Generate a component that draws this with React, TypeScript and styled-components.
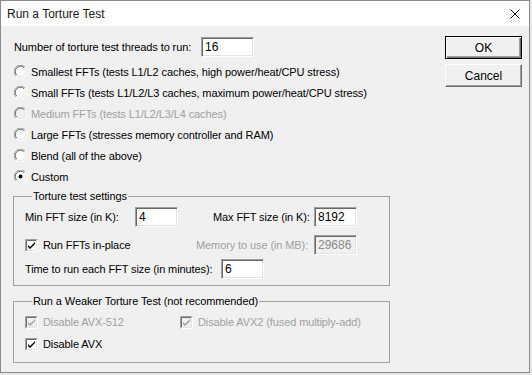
import * as React from "react";
import styled, { createGlobalStyle } from "styled-components";

const GlobalStyle = createGlobalStyle`
  html, body {
    margin: 0;
    padding: 0;
    background: #e6e6e6;
  }
  * {
    box-sizing: border-box;
  }
`;

const Window = styled.div`
  width: 530px;
  height: 373px;
  border: 1px solid #8a8a8a;
  background: #f0f0f0;
  font-family: "Liberation Sans", Arial, sans-serif;
  font-size: 11px;
  letter-spacing: -0.1px;
  color: #000;
  display: flex;
  flex-direction: column;
`;

const TitleBar = styled.div`
  height: 25px;
  background: #fff;
  display: flex;
  align-items: center;
  justify-content: space-between;
  padding: 0 9px 0 6px;
  font-size: 12px;
  letter-spacing: 0;
  color: #1a1a1a;
`;

const Body = styled.div`
  flex: 1;
  display: flex;
  padding: 0 0 0 12px;
`;

const LeftColumn = styled.div`
  width: 377px;
  display: flex;
  flex-direction: column;
  padding-top: 11px;
`;

const RightColumn = styled.div`
  margin-left: 55px;
  padding-top: 10px;
  display: flex;
  flex-direction: column;
  gap: 5px;
`;

const Row = styled.div<{ $height?: number; $indent?: number }>`
  height: ${(p) => p.$height ?? 20}px;
  display: flex;
  align-items: center;
  padding-left: ${(p) => p.$indent ?? 1}px;
`;

const Label = styled.span<{ $width?: number; $disabled?: boolean }>`
  width: ${(p) => (p.$width ? `${p.$width}px` : "auto")};
  flex-shrink: 0;
  white-space: nowrap;
  color: ${(p) => (p.$disabled ? "#a0a0a0" : "#000")};
`;

const Edit = styled.div<{ $width: number; $disabled?: boolean }>`
  width: ${(p) => p.$width}px;
  height: 20px;
  background: ${(p) => (p.$disabled ? "#f0f0f0" : "#fff")};
  color: ${(p) => (p.$disabled ? "#8a8a8a" : "#000")};
  border-top: 1px solid #a0a0a0;
  border-left: 1px solid #a0a0a0;
  border-right: 1px solid #fff;
  border-bottom: 1px solid #fff;
  box-shadow: inset 1px 1px 0 #696969, inset -1px -1px 0 #e3e3e3;
  padding: 2px 3px 0 3px;
  font-size: 12px;
  letter-spacing: 0;
  line-height: 15px;
  flex-shrink: 0;
`;

const Choice = styled.label<{ $disabled?: boolean; $gap?: number; $width?: number }>`
  display: flex;
  align-items: center;
  gap: ${(p) => p.$gap ?? 4}px;
  width: ${(p) => (p.$width ? `${p.$width}px` : "auto")};
  flex-shrink: 0;
  white-space: nowrap;
  color: ${(p) => (p.$disabled ? "#a0a0a0" : "#000")};
`;

const Group = styled.fieldset<{ $top: number; $bottom: number }>`
  margin: ${(p) => p.$top}px 0 0 0;
  padding: 2px 0 ${(p) => p.$bottom}px 11px;
  border: 1px solid #a0a0a0;
  min-width: 0;
  display: flex;
  flex-direction: column;
`;

const Legend = styled.legend`
  margin-left: 7px;
  padding: 0 1px;
  line-height: 13px;
`;

const Button = styled.button<{ $default?: boolean }>`
  width: 77px;
  height: 23px;
  font-family: "Liberation Sans", Arial, sans-serif;
  font-size: 12px;
  color: #000;
  background: #f0f0f0;
  padding: 0;
  border-top: 1px solid ${(p) => (p.$default ? "#000" : "#fff")};
  border-left: 1px solid ${(p) => (p.$default ? "#000" : "#fff")};
  border-right: 1px solid ${(p) => (p.$default ? "#000" : "#696969")};
  border-bottom: 1px solid ${(p) => (p.$default ? "#000" : "#696969")};
  box-shadow: ${(p) =>
    p.$default
      ? "inset 1px 1px 0 #fff, inset -1px -1px 0 #696969, inset -2px -2px 0 #a0a0a0"
      : "inset -1px -1px 0 #a0a0a0"};
`;

const Radio = ({ checked, disabled }: { checked?: boolean; disabled?: boolean }) => (
  <svg width="13" height="13" viewBox="0 0 13 13">
    <circle cx="6.5" cy="6.5" r="5.5" fill={disabled ? "#f0f0f0" : "#fff"} />
    <path d="M11 2 A6 6 0 0 0 2 11" fill="none" stroke="#a0a0a0" strokeWidth="1" />
    <path d="M10.2 2.8 A5 5 0 0 0 2.8 10.2" fill="none" stroke="#696969" strokeWidth="1" />
    <path d="M2 11 A6 6 0 0 0 11 2" fill="none" stroke="#fff" strokeWidth="1" />
    <path d="M2.8 10.2 A5 5 0 0 0 10.2 2.8" fill="none" stroke="#e3e3e3" strokeWidth="1" />
    {checked && <circle cx="6.5" cy="6.5" r="2" fill="#000" />}
  </svg>
);

const Check = ({ checked, disabled }: { checked?: boolean; disabled?: boolean }) => (
  <svg width="13" height="13" viewBox="0 0 13 13">
    <rect x="0" y="0" width="13" height="13" fill="#fff" />
    <rect x="2" y="2" width="9" height="9" fill={disabled ? "#f0f0f0" : "#fff"} />
    <path d="M0.5 12.5 V0.5 H12.5" fill="none" stroke="#a0a0a0" />
    <path d="M1.5 11.5 V1.5 H11.5" fill="none" stroke="#696969" />
    <path d="M1.5 11.5 H11.5 V1.5" fill="none" stroke="#e3e3e3" />
    {checked && (
      <path
        d="M3 6 L5 8 L10 3 V5 L5 10 L3 8 Z"
        fill={disabled ? "#a0a0a0" : "#000"}
      />
    )}
  </svg>
);

const CloseIcon = () => (
  <svg width="10" height="10" viewBox="0 0 10 10">
    <path d="M0.5 0.5 L9.5 9.5 M9.5 0.5 L0.5 9.5" stroke="#000" strokeWidth="1" />
  </svg>
);

const radios = [
  { text: "Smallest FFTs (tests L1/L2 caches, high power/heat/CPU stress)" },
  { text: "Small FFTs (tests L1/L2/L3 caches, maximum power/heat/CPU stress)" },
  { text: "Medium FFTs (tests L1/L2/L3/L4 caches)", disabled: true },
  { text: "Large FFTs (stresses memory controller and RAM)" },
  { text: "Blend (all of the above)" },
  { text: "Custom", checked: true },
];

const App = () => {
  return (
    <Window>
      <GlobalStyle />
      <TitleBar>
        <span>Run a Torture Test</span>
        <CloseIcon />
      </TitleBar>
      <Body>
        <LeftColumn>
          <Row style={{ marginBottom: 4 }}>
            <Label $width={187}>Number of torture test threads to run:</Label>
            <Edit $width={53}>16</Edit>
          </Row>
          {radios.map((r) => (
            <Row key={r.text} $height={21}>
              <Choice $disabled={r.disabled}>
                <Radio checked={r.checked} disabled={r.disabled} />
                {r.text}
              </Choice>
            </Row>
          ))}

          <Group $top={3} $bottom={6}>
            <Legend>Torture test settings</Legend>
            <Row $indent={0} style={{ marginTop: 2 }}>
              <Label $width={110}>Min FFT size (in K):</Label>
              <Edit $width={43}>4</Edit>
              <Label $width={101} style={{ marginLeft: 35 }}>
                Max FFT size (in K):
              </Label>
              <Edit $width={43}>8192</Edit>
            </Row>
            <Row $indent={0} style={{ marginTop: 8 }}>
              <Choice $gap={5} $width={171}>
                <Check checked />
                Run FFTs in-place
              </Choice>
              <Label $width={118} $disabled>
                Memory to use (in MB):
              </Label>
              <Edit $width={43} $disabled>
                29686
              </Edit>
            </Row>
            <Row $indent={0} style={{ marginTop: 4 }}>
              <Label $width={196}>Time to run each FFT size (in minutes):</Label>
              <Edit $width={43}>6</Edit>
            </Row>
          </Group>

          <Group $top={9} $bottom={8}>
            <Legend>Run a Weaker Torture Test (not recommended)</Legend>
            <Row $indent={0} style={{ marginTop: 2 }}>
              <Choice $gap={5} $width={155} $disabled>
                <Check checked disabled />
                Disable AVX-512
              </Choice>
              <Choice $gap={5} $disabled>
                <Check checked disabled />
                Disable AVX2 (fused multiply-add)
              </Choice>
            </Row>
            <Row $indent={0} style={{ marginTop: 2 }}>
              <Choice $gap={5}>
                <Check checked />
                Disable AVX
              </Choice>
            </Row>
          </Group>
        </LeftColumn>
        <RightColumn>
          <Button $default>OK</Button>
          <Button>Cancel</Button>
        </RightColumn>
      </Body>
    </Window>
  );
};

export default App;
